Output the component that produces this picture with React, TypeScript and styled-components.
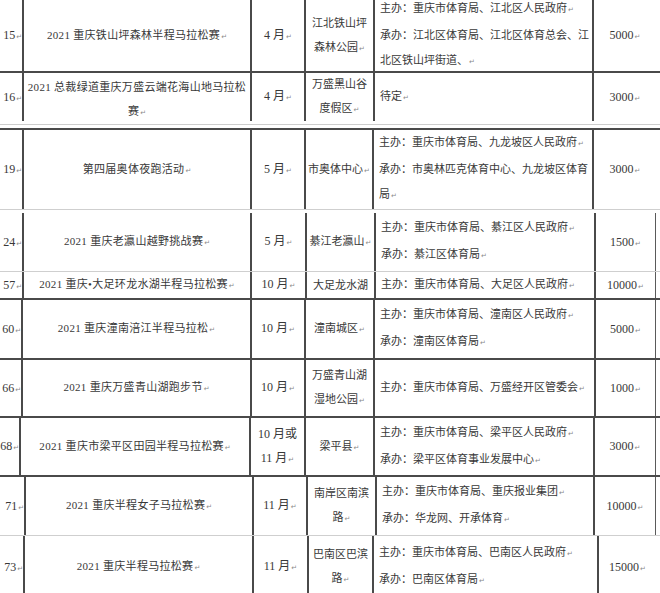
import React from 'react';
import styled, { createGlobalStyle } from 'styled-components';

const GlobalStyle = createGlobalStyle`
  html, body {
    margin: 0;
    padding: 0;
    background: #fff;
  }
`;

type Edge = 'dark' | 'light' | 'none';

type RowData = {
    no: string;
    name: string;
    month: string;
    venue: string;
    org: string;
    amount: string;
    lines: number[];
    right?: boolean;
    h: number;
    bottom: Edge;
    shift?: number;
};

type GapData = { gap: true; h: number; top?: number; line?: boolean; dark?: boolean };

const edgeColor = (e: Edge) => (e === 'dark' ? '2px solid #4a4a4a' : e === 'light' ? '1px solid #cfcfcf' : 'none');

const rows: (RowData | GapData)[] = [
    {
        no: '15↵', name: '2021 重庆铁山坪森林半程马拉松赛↵', month: '4 月↵',
        venue: '江北铁山坪\n森林公园↵',
        org: '主办：重庆市体育局、江北区人民政府↵\n承办：江北区体育局、江北区体育总会、江\n北区铁山坪街道、↵',
        amount: '5000↵', lines: [22, 250, 304, 373, 592], h: 73, bottom: 'dark',
    },
    {
        no: '16↵', name: '2021 总裁绿道重庆万盛云端花海山地马拉松\n赛↵', month: '4 月↵',
        venue: '万盛黑山谷\n度假区↵', org: '待定↵',
        amount: '3000↵', lines: [22, 250, 304, 373, 592], h: 48, bottom: 'none', shift: 6,
    },
    { gap: true, h: 6, top: 3, line: true, dark: true },
    {
        no: '19↵', name: '第四届奥体夜跑活动↵', month: '5 月↵',
        venue: '市奥体中心↵',
        org: '主办：重庆市体育局、九龙坡区人民政府↵\n承办：市奥林匹克体育中心、九龙坡区体育\n局↵',
        amount: '3000↵', lines: [22, 250, 304, 372, 592], h: 80, bottom: 'light',
    },
    { gap: true, h: 3 },
    {
        no: '24↵', name: '2021 重庆老瀛山越野挑战赛↵', month: '5 月↵',
        venue: '綦江老瀛山↵',
        org: '主办：重庆市体育局、綦江区人民政府↵\n承办：綦江区体育局↵',
        amount: '1500↵', lines: [22, 250, 305, 374, 594], right: true, h: 59, bottom: 'light',
    },
    {
        no: '57↵', name: '2021 重庆•大足环龙水湖半程马拉松赛↵', month: '10 月↵',
        venue: '大足龙水湖', org: '主办：重庆市体育局、大足区人民政府↵',
        amount: '10000↵', lines: [22, 250, 305, 374, 594], right: true, h: 28, bottom: 'dark',
    },
    {
        no: '60↵', name: '2021 重庆潼南涪江半程马拉松↵', month: '10 月↵',
        venue: '潼南城区↵',
        org: '主办：重庆市体育局、潼南区人民政府↵\n承办：潼南区体育局↵',
        amount: '5000↵', lines: [21, 250, 304, 373, 594], right: true, h: 60, bottom: 'dark',
    },
    {
        no: '66↵', name: '2021 重庆万盛青山湖跑步节↵', month: '10 月↵',
        venue: '万盛青山湖\n湿地公园↵', org: '主办：重庆市体育局、万盛经开区管委会↵',
        amount: '1000↵', lines: [21, 250, 304, 373, 594], right: true, h: 58, bottom: 'dark',
    },
    {
        no: '68↵', name: '2021 重庆市梁平区田园半程马拉松赛↵', month: '10 月或\n11 月↵',
        venue: '梁平县↵',
        org: '主办：重庆市体育局、梁平区人民政府↵\n承办：梁平区体育事业发展中心↵',
        amount: '3000↵', lines: [19, 249, 304, 373, 593], right: true, h: 59, bottom: 'dark',
    },
    {
        no: '71↵', name: '2021 重庆半程女子马拉松赛↵', month: '11 月↵',
        venue: '南岸区南滨\n路↵',
        org: '主办：重庆市体育局、重庆报业集团↵\n承办：华龙网、开承体育↵',
        amount: '10000↵', lines: [24, 252, 306, 375, 593], right: true, h: 59, bottom: 'light',
    },
    {
        no: '73↵', name: '2021 重庆半程马拉松赛↵', month: '11 月↵',
        venue: '巴南区巴滨\n路↵',
        org: '主办：重庆市体育局、巴南区人民政府↵\n承办：巴南区体育局↵',
        amount: '15000↵', lines: [23, 252, 307, 372, 597], h: 62, bottom: 'none',
    },
];

// swap the return arrows for the small grey paragraph mark
const withMarks = (text: string) => (
    <Text>
        {text.split('↵').map((part, i, all) => (
            <React.Fragment key={i}>
                {part}
                {i < all.length - 1 && <Mark>↵</Mark>}
            </React.Fragment>
        ))}
    </Text>
);

const RIGHT_EDGE = 656;

export default function App() {
    return (
        <>
            <GlobalStyle />
            <Page>
                {rows.map((r, i) => {
                    if ('gap' in r) {
                        return <Gap key={i} $h={r.h} $top={r.top ?? 0} $line={!!r.line} $dark={!!r.dark} />;
                    }
                    const [a, b, c, d, e] = r.lines;
                    const cols = `${a}px ${b - a}px ${c - b}px ${d - c}px ${e - d}px ${RIGHT_EDGE - e}px 1fr`;
                    return (
                        <Row key={i} $cols={cols} $h={r.h} $bottom={r.bottom}>
                            <NoCell>{withMarks(r.no)}</NoCell>
                            <NameCell $shift={r.shift ?? 0}>{withMarks(r.name)}</NameCell>
                            <MonthCell>{withMarks(r.month)}</MonthCell>
                            <VenueCell>{withMarks(r.venue)}</VenueCell>
                            <OrgCell>{withMarks(r.org)}</OrgCell>
                            <AmountCell $right={!!r.right}>{withMarks(r.amount)}</AmountCell>
                            <Rest />
                        </Row>
                    );
                })}
            </Page>
        </>
    );
}

const Page = styled.div`
    width: 660px;
    height: 593px;
    overflow: hidden;
    display: flex;
    flex-direction: column;
    background: #fff;
    color: #383838;
    font-family: "Liberation Serif", "Noto Sans CJK SC", serif;
    font-size: 11px;
`;

const Row = styled.div<{ $cols: string; $h: number; $bottom: Edge }>`
    display: grid;
    grid-template-columns: ${p => p.$cols};
    height: ${p => p.$h}px;
    flex-shrink: 0;
    box-sizing: border-box;
    border-bottom: ${p => edgeColor(p.$bottom)};
`;

const Gap = styled.div<{ $h: number; $top: number; $line: boolean; $dark: boolean }>`
    flex-shrink: 0;
    box-sizing: border-box;
    height: ${p => p.$h}px;
    margin-top: ${p => p.$top}px;
    border-top: ${p => (p.$line ? '1px solid #cdcdcd' : 'none')};
    border-bottom: ${p => (p.$dark ? '2px solid #4a4a4a' : 'none')};
`;

const Cell = styled.div`
    display: flex;
    align-items: center;
    min-width: 0;
    overflow: hidden;
    box-sizing: border-box;
    border-left: 2px solid #4a4a4a;
`;

const Text = styled.span`
    display: block;
    white-space: pre;
`;

const NoCell = styled(Cell)`
    border-left: none;
    justify-content: flex-end;
    font-size: 12px;
`;

const NameCell = styled(Cell)<{ $shift: number }>`
    justify-content: center;
    text-align: center;
    line-height: 24px;
    letter-spacing: 0.3px;
    padding-top: ${p => p.$shift}px;
`;

const MonthCell = styled(Cell)`
    justify-content: center;
    text-align: center;
    line-height: 24px;
    font-size: 12px;
`;

const VenueCell = styled(Cell)`
    justify-content: center;
    text-align: center;
    line-height: 24px;
`;

const OrgCell = styled(Cell)`
    justify-content: flex-start;
    padding-left: 5px;
    line-height: 25px;
`;

const AmountCell = styled(Cell)<{ $right: boolean }>`
    justify-content: center;
    font-size: 12px;
    border-right: ${p => (p.$right ? '1.5px solid #5a5a5a' : 'none')};
`;

const Rest = styled.div``;

const Mark = styled.span`
    font-family: "DejaVu Sans", sans-serif;
    font-size: 7px;
    color: #8a8a8a;
    margin-left: 1px;
    letter-spacing: 0;
`;
